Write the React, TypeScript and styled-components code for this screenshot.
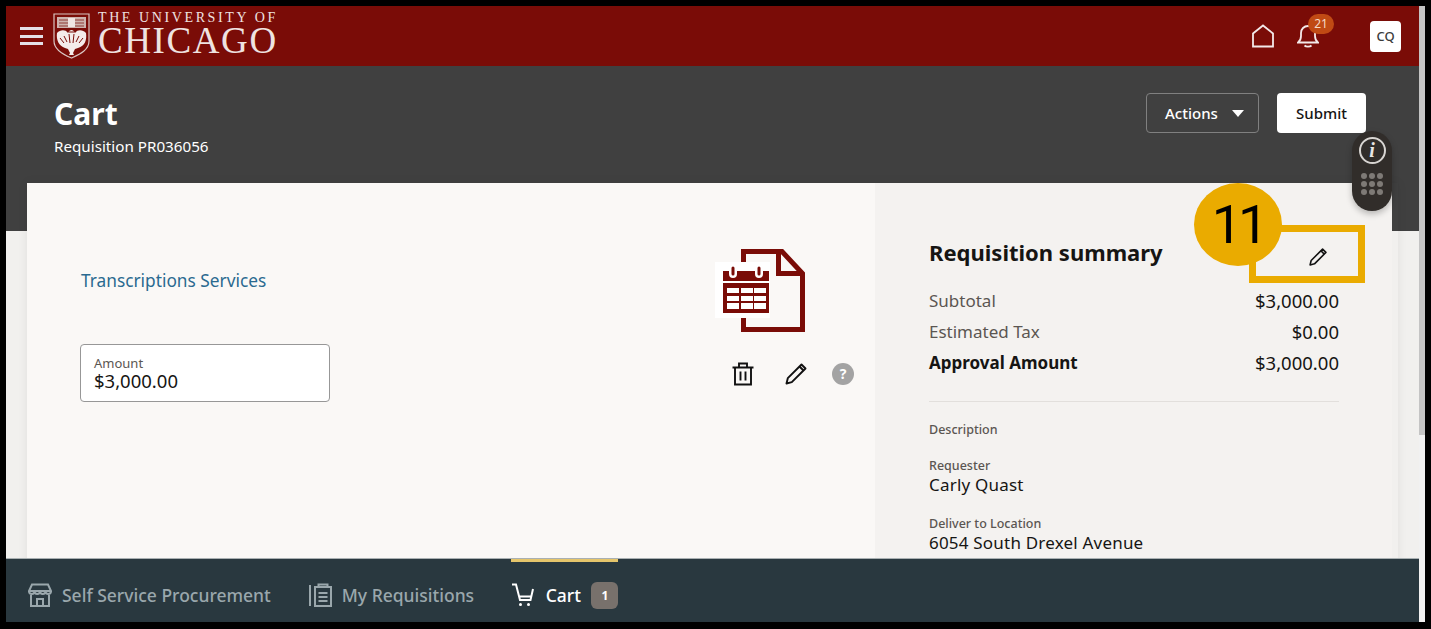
import React from "react";
import styled, { createGlobalStyle } from "styled-components";

const GlobalStyle = createGlobalStyle`
    html, body {
        margin: 0;
        padding: 0;
        background: #000;
    }
    * {
        box-sizing: border-box;
    }
`;

const summaryRows = [
    { label: "Subtotal", value: "$3,000.00", strong: false },
    { label: "Estimated Tax", value: "$0.00", strong: false },
    { label: "Approval Amount", value: "$3,000.00", strong: true },
];

const summaryFields = [
    { label: "Requester", value: "Carly Quast" },
    { label: "Deliver to Location", value: "6054 South Drexel Avenue" },
];

const Shield = () => (
    <svg width="37" height="46" viewBox="0 0 37 46" fill="none">
        <path d="M1 1h35v27c0 9-9 13-17.500 17C11 42 1 37 1 28z" stroke="#d9c5c1" strokeWidth="1.200" />
        <path d="M4 4h29v11H4z" fill="#cdb3ae" />
        <path d="M6 7h25M6 10h25M6 13h25" stroke="#8f3a34" strokeWidth="1" />
        <path d="M15 5h7v9h-7z" fill="#efe5e3" />
        <path d="M4 20c3-3 8-4 11 0 1-2 2-3 3.500-3s2.500 1 3.500 3c3-4 8-3 11 0 1 7-1 13-8 15l-3 1-2 4 1 2h-5l1-2-2-4-3-1C6 33 3 27 4 20z" fill="#f4ecea" />
        <path d="M16 21l1 9M21 21l-1 9M11 23l3 6M26 23l-3 6M7 25l4 5M30 25l-4 5M15.500 19h6" stroke="#7a0c07" strokeWidth="1" />
    </svg>
);

const HomeIcon = () => (
    <svg width="24" height="24" viewBox="0 0 24 24" fill="none" stroke="#f3e9e9" strokeWidth="1.800">
        <path d="M2 22.500V9.500L12 1.500l10 8v13z" />
    </svg>
);

const BellIcon = () => (
    <svg width="22" height="24" viewBox="0 0 22 24" fill="none" stroke="#f3e9e9" strokeWidth="1.800">
        <path d="M1 18.500c2-1.500 3-3 3-6.500V9c0-4 3-7 7-7s7 3 7 7v3c0 3.500 1 5 3 6.500z" />
        <path d="M7.500 21.500c1.500 1.500 5.500 1.500 7 0" />
    </svg>
);

const Caret = () => (
    <svg width="12" height="7" viewBox="0 0 12 7">
        <path d="M0 0h12L6 7z" fill="#fff" />
    </svg>
);

const PencilIcon = ({ size }: { size: number }) => (
    <svg width={size} height={size} viewBox="0 0 24 24" fill="none" stroke="#111" strokeWidth="1.900" strokeLinejoin="round">
        <path d="M2.500 21.500l1.300-5.300L17.500 2.500l4 4L7.800 20.200z" />
        <path d="M15.500 4.500l4 4" />
    </svg>
);

const TrashIcon = () => (
    <svg width="24" height="24" viewBox="0 0 24 24" fill="none" stroke="#111" strokeWidth="1.900">
        <path d="M1.500 5.500h21M8 5.500V1.500h8v4M4 5.500v17h16v-17M9.500 9.500v9M14.500 9.500v9" />
    </svg>
);

const DocumentIcon = () => (
    <svg width="90" height="84" viewBox="0 0 90 84">
        <path d="M28.500 15V2.500H67l20.500 22v56h-59V67" fill="none" stroke="#7a0c07" strokeWidth="5" />
        <path d="M63.500 4v20.500H86" fill="none" stroke="#7a0c07" strokeWidth="5" />
        <rect x="0" y="13" width="55" height="56" fill="#fff" />
        <rect x="8" y="22" width="46" height="10" fill="#7a0c07" />
        <path d="M18 19v6M44 19v6" stroke="#fff" strokeWidth="8" strokeLinecap="round" />
        <path d="M18 19v6M44 19v6" stroke="#7a0c07" strokeWidth="3" strokeLinecap="round" />
        <rect x="8" y="34" width="46" height="30" fill="#7a0c07" />
        <path d="M12 39h12v5H12zM26 39h12v5H26zM39 39h12v5H39zM12 47h12v5H12zM26 47h12v5H26zM39 47h12v5H39zM12 54h12v6H12zM26 54h12v6H26zM39 54h12v6H39z" fill="#fff" />
    </svg>
);

const StoreIcon = () => (
    <svg width="24" height="24" viewBox="0 0 24 24" fill="none" stroke="#9aa7ac" strokeWidth="2">
        <path d="M4 1.500h16l3 6.500H1zM1 8c0 4 5.500 4 5.500 0 0 4 5.500 4 5.500 0 0 4 5.500 4 5.500 0 0 4 5.500 4 5.500 0M3 12v11h18V12M9 23v-7h6v7" />
    </svg>
);

const RequisitionIcon = () => (
    <svg width="24" height="24" viewBox="0 0 24 24" fill="none" stroke="#9aa7ac" strokeWidth="2">
        <path d="M2 2v21M7 4h16v19H7zM10.500 5V1.500h9V5M10.500 10h9M10.500 14h9M10.500 18h9" />
    </svg>
);

const CartIcon = () => (
    <svg width="24" height="24" viewBox="0 0 24 24" fill="none" stroke="#fff" strokeWidth="2">
        <path d="M1 1.500h4L9 17h10.500L22 6M8 13.500h12.500" />
        <circle cx="9.500" cy="21.500" r="1.500" fill="#fff" stroke="none" />
        <circle cx="17.500" cy="21.500" r="1.500" fill="#fff" stroke="none" />
    </svg>
);

const App = () => {
    return (
        <Screen>
            <GlobalStyle />
            <Frame>
                <Page>
                    <TopBar>
                        <Brand>
                            <Hamburger>
                                <span />
                                <span />
                                <span />
                            </Hamburger>
                            <Shield />
                            <Wordmark>
                                <WordmarkTop>THE UNIVERSITY OF</WordmarkTop>
                                <WordmarkMain>CHICAGO</WordmarkMain>
                            </Wordmark>
                        </Brand>
                        <TopActions>
                            <HomeIcon />
                            <BellWrap>
                                <BellIcon />
                                <Badge>21</Badge>
                            </BellWrap>
                            <Avatar>CQ</Avatar>
                        </TopActions>
                    </TopBar>
                    <Scroller>
                        <TitleBand>
                            <div>
                                <PageTitle>Cart</PageTitle>
                                <PageSub>Requisition PR036056</PageSub>
                            </div>
                            <ButtonRow>
                                <ActionsButton>
                                    Actions
                                    <Caret />
                                </ActionsButton>
                                <SubmitButton>Submit</SubmitButton>
                            </ButtonRow>
                        </TitleBand>
                        <Sheet>
                            <Card>
                                <LinePanel>
                                    <LineMain>
                                        <LineLink>Transcriptions Services</LineLink>
                                        <AmountBox>
                                            <AmountLabel>Amount</AmountLabel>
                                            <AmountValue>$3,000.00</AmountValue>
                                        </AmountBox>
                                    </LineMain>
                                    <LineSide>
                                        <DocumentWrap>
                                            <DocumentIcon />
                                        </DocumentWrap>
                                        <LineActions>
                                            <TrashIcon />
                                            <PencilIcon size={24} />
                                            <HelpDot>?</HelpDot>
                                        </LineActions>
                                    </LineSide>
                                </LinePanel>
                                <SummaryPanel>
                                    <SummaryTitle>Requisition summary</SummaryTitle>
                                    {summaryRows.map((row) => (
                                        <SummaryRow key={row.label} $strong={row.strong}>
                                            <span>{row.label}</span>
                                            <SummaryValue>{row.value}</SummaryValue>
                                        </SummaryRow>
                                    ))}
                                    <Divider />
                                    <FieldLabel>Description</FieldLabel>
                                    {summaryFields.map((field) => (
                                        <Field key={field.label}>
                                            <FieldLabel>{field.label}</FieldLabel>
                                            <FieldValue>{field.value}</FieldValue>
                                        </Field>
                                    ))}
                                </SummaryPanel>
                            </Card>
                        </Sheet>
                    </Scroller>
                    <BottomBar>
                        <Tab>
                            <StoreIcon />
                            <TabLabel>Self Service Procurement</TabLabel>
                        </Tab>
                        <Tab>
                            <RequisitionIcon />
                            <TabLabel>My Requisitions</TabLabel>
                        </Tab>
                        <Tab $active>
                            <CartIcon />
                            <TabLabel $active>Cart</TabLabel>
                            <TabCount>1</TabCount>
                        </Tab>
                    </BottomBar>
                </Page>
                <ScrollTrack>
                    <ScrollThumb />
                </ScrollTrack>
                <FloatingTools>
                    <InfoCircle>i</InfoCircle>
                    <DotGrid>
                        {Array.from({ length: 9 }).map((_, i) => (
                            <span key={i} />
                        ))}
                    </DotGrid>
                </FloatingTools>
                <CalloutBox>
                    <PencilIcon size={20} />
                </CalloutBox>
                <CalloutNumber>11</CalloutNumber>
            </Frame>
        </Screen>
    );
};

const Screen = styled.div`
    width: 1431px;
    height: 629px;
    padding: 6px 6px 7px 6px;
    background: #000;
    overflow: hidden;
    font-family: "Noto Sans", sans-serif;
`;

const Frame = styled.div`
    position: relative;
    display: flex;
    width: 1419px;
    height: 616px;
`;

const Page = styled.div`
    display: flex;
    flex-direction: column;
    width: 1413px;
    height: 100%;
`;

const TopBar = styled.header`
    display: flex;
    flex: none;
    align-items: center;
    justify-content: space-between;
    height: 60px;
    padding: 0 18px 0 14px;
    background: #7a0c07;
`;

const Brand = styled.div`
    display: flex;
    align-items: center;
`;

const Hamburger = styled.div`
    display: flex;
    flex-direction: column;
    gap: 4.500px;
    width: 23px;
    margin-right: 10px;

    span {
        height: 3px;
        background: #e4dfe6;
    }
`;

const Wordmark = styled.div`
    display: flex;
    flex-direction: column;
    margin: -4px 0 0 8px;
    color: #efe3e1;
    font-family: "Liberation Serif", serif;
`;

const WordmarkTop = styled.div`
    font-size: 14px;
    line-height: 14px;
    letter-spacing: 2.600px;
    white-space: nowrap;
`;

const WordmarkMain = styled.div`
    font-size: 37px;
    font-weight: 400;
    line-height: 32px;
    letter-spacing: 1.600px;
`;

const TopActions = styled.div`
    display: flex;
    align-items: center;
`;

const BellWrap = styled.div`
    position: relative;
    display: flex;
    margin: 0 51px 0 22px;
`;

const Badge = styled.span`
    position: absolute;
    top: -10px;
    left: 11px;
    width: 26px;
    height: 20px;
    border-radius: 10px;
    background: #c04a14;
    color: #f5d9c8;
    font-size: 12px;
    line-height: 20px;
    text-align: center;
`;

const Avatar = styled.div`
    width: 31px;
    height: 31px;
    border-radius: 4px;
    background: #fff;
    color: #3b3b3b;
    font-size: 13px;
    font-weight: 500;
    line-height: 31px;
    text-align: center;
`;

const Scroller = styled.div`
    flex: 1;
    min-height: 0;
    overflow: hidden;
`;

const TitleBand = styled.section`
    display: flex;
    justify-content: space-between;
    height: 117px;
    padding: 27px 53px 0 48px;
    background: #404040;
    color: #fff;
`;

const PageTitle = styled.h1`
    margin: 0;
    font-size: 30px;
    font-weight: 700;
    line-height: 42px;
`;

const PageSub = styled.div`
    font-size: 15.200px;
    line-height: 22px;
`;

const ButtonRow = styled.div`
    display: flex;
    gap: 18px;
    height: 40px;
`;

const ActionsButton = styled.div`
    display: flex;
    align-items: center;
    gap: 14px;
    width: 113px;
    padding-left: 18px;
    border: 1px solid #808080;
    border-radius: 4px;
    font-size: 15px;
    font-weight: 500;
`;

const SubmitButton = styled.div`
    width: 89px;
    border-radius: 4px;
    background: #fff;
    color: #161513;
    font-size: 15px;
    font-weight: 500;
    line-height: 40px;
    text-align: center;
`;

const Sheet = styled.section`
    padding: 0 21px;
    background: linear-gradient(#404040 48px, #f1f0ee 48px);
`;

const Card = styled.div`
    display: grid;
    grid-template-columns: 848px 517px;
    height: 420px;
    box-shadow: 0 0 10px rgba(0, 0, 0, 0.07);
`;

const LinePanel = styled.div`
    display: flex;
    justify-content: space-between;
    padding: 66px 21px 0 53px;
    background: #faf8f6;
`;

const LineMain = styled.div`
    display: flex;
    flex-direction: column;
    align-items: flex-start;
`;

const LineLink = styled.a`
    margin: 19px 0 50px 1px;
    color: #2a6a90;
    font-size: 17.300px;
    line-height: 26px;
`;

const AmountBox = styled.div`
    width: 250px;
    height: 58px;
    padding: 10px 13px;
    border: 1px solid #979797;
    border-radius: 4px;
    background: #fff;
`;

const AmountLabel = styled.div`
    color: #5b5652;
    font-size: 13px;
    line-height: 16px;
`;

const AmountValue = styled.div`
    color: #161513;
    font-size: 18.500px;
    line-height: 20px;
`;

const LineSide = styled.div`
    display: flex;
    flex-direction: column;
    align-items: flex-end;
`;

const DocumentWrap = styled.div`
    display: flex;
    margin-right: 49px;
`;

const LineActions = styled.div`
    display: flex;
    align-items: center;
    gap: 29px;
    margin-top: 29px;
`;

const HelpDot = styled.span`
    width: 22px;
    height: 22px;
    margin-left: -5px;
    border-radius: 50%;
    background: #a3a3a3;
    color: #fff;
    font-size: 14px;
    font-weight: 700;
    line-height: 22px;
    text-align: center;
`;

const SummaryPanel = styled.aside`
    padding: 51px 53px 0 54px;
    background: #f4f2f0;
    color: #161513;
`;

const SummaryTitle = styled.h2`
    margin: 0 0 15px;
    font-size: 22px;
    font-weight: 700;
    line-height: 36px;
`;

const SummaryRow = styled.div<{ $strong: boolean }>`
    display: flex;
    justify-content: space-between;
    height: 31px;
    color: ${(props) => (props.$strong ? "#161513" : "#5b5652")};
    font-size: 17px;
    font-weight: ${(props) => (props.$strong ? 700 : 400)};
    line-height: 31px;
`;

const SummaryValue = styled.span`
    color: #161513;
    font-size: 18.500px;
    font-weight: 400;
`;

const Divider = styled.div`
    height: 1px;
    margin: 23px 0 19px;
    background: #e2dfdc;
`;

const Field = styled.div`
    margin-top: 18px;
    padding-bottom: 2px;
`;

const FieldLabel = styled.div`
    color: #5b5652;
    font-size: 12.500px;
    font-weight: 500;
    line-height: 18px;
`;

const FieldValue = styled.div`
    font-size: 17px;
    letter-spacing: 0.2px;
    line-height: 20px;
`;

const BottomBar = styled.nav`
    display: flex;
    flex: none;
    gap: 37px;
    height: 64px;
    padding-left: 22px;
    border-top: 1px solid #a9b0b2;
    background: #29383f;
`;

const Tab = styled.div<{ $active?: boolean }>`
    display: flex;
    align-items: center;
    gap: ${(props) => (props.$active ? "10.500px" : "10px")};
    height: 63px;
    padding-top: 9px;
    box-shadow: ${(props) => (props.$active ? "inset 0 3px 0 #e5c56b" : "none")};
`;

const TabLabel = styled.span<{ $active?: boolean }>`
    color: ${(props) => (props.$active ? "#fff" : "#9aa7ac")};
    font-size: 17.500px;
    font-weight: 500;
`;

const TabCount = styled.span`
    width: 27px;
    height: 27px;
    border-radius: 6px;
    background: #78716c;
    color: #fff;
    font-size: 12px;
    font-weight: 700;
    line-height: 27px;
    text-align: center;
`;

const ScrollTrack = styled.div`
    width: 6px;
    height: 100%;
    background: #f1f1f1;
`;

const ScrollThumb = styled.div`
    height: 429px;
    background: #c4c4c4;
`;

const FloatingTools = styled.div`
    position: absolute;
    top: 125px;
    left: 1346px;
    display: flex;
    flex-direction: column;
    align-items: center;
    gap: 9px;
    width: 40px;
    height: 80px;
    padding-top: 6px;
    border-radius: 20px;
    background: #312d2a;
    box-shadow: 0 3px 6px rgba(0, 0, 0, 0.25);
`;

const InfoCircle = styled.div`
    width: 27px;
    height: 27px;
    border: 2px solid #d8d5d2;
    border-radius: 50%;
    color: #e8e6e4;
    font-family: "Liberation Serif", serif;
    font-size: 20px;
    font-style: italic;
    font-weight: 700;
    line-height: 23px;
    text-align: center;
`;

const DotGrid = styled.div`
    display: grid;
    grid-template-columns: repeat(3, 6px);
    gap: 2px;

    span {
        width: 6px;
        height: 6px;
        border-radius: 50%;
        background: #7e7a76;
    }
`;

const CalloutBox = styled.div`
    position: absolute;
    top: 219px;
    left: 1243px;
    display: flex;
    align-items: center;
    justify-content: flex-end;
    width: 116px;
    height: 58px;
    padding: 6px 30px 0 0;
    border: 7.500px solid #eaab00;
`;

const CalloutNumber = styled.div`
    position: absolute;
    top: 177px;
    left: 1188px;
    width: 88px;
    height: 83px;
    border-radius: 50%;
    background: #eaab00;
    color: #000;
    font-family: Roboto, sans-serif;
    font-size: 54px;
    font-weight: 400;
    letter-spacing: -4px;
    line-height: 83px;
    text-align: center;
`;

export default App;
